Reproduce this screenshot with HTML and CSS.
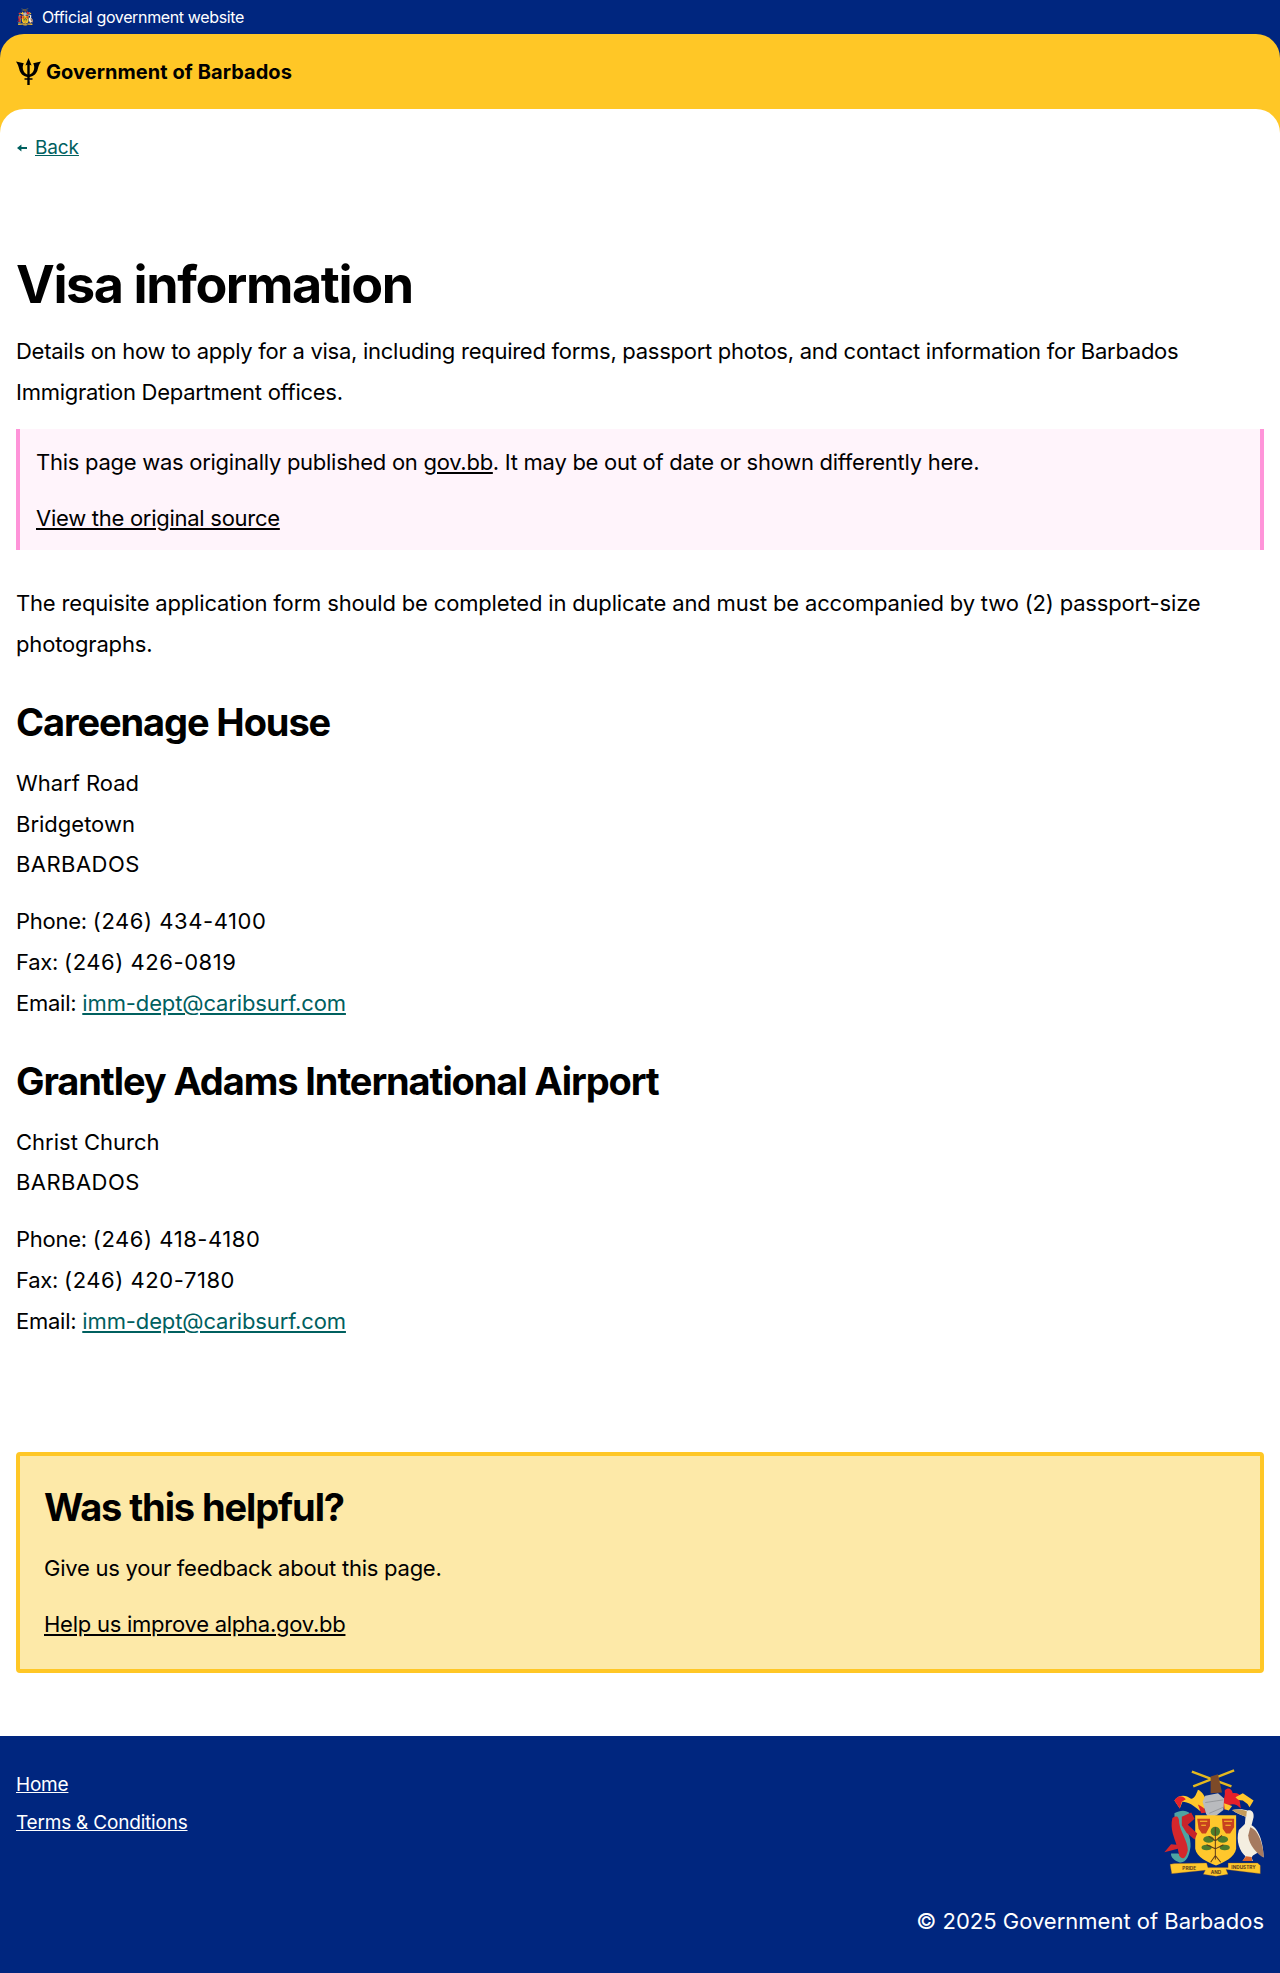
FILE: index.html
```html
<!DOCTYPE html>
<html lang="en">
<head>
  <meta charset="UTF-8">
  <meta name="viewport" content="width=device-width,initial-scale=1.0">
  <title>Visa information - Government of Barbados</title>
  <link rel="stylesheet" href="styles.css">
</head>
<body>
  <svg class="defs" width="0" height="0" aria-hidden="true">
    <symbol id="crest" viewBox="105 58 298 322">
      <!-- crossed sugar canes and arm -->
      <path d="M188 66 L306 110 M314 62 L192 110" stroke="#e3b81f" stroke-width="7" fill="none"/>
      <path d="M244 80 L266 74 L278 128 L244 130 Z" fill="#7d4a28"/>
      <!-- mantling -->
      <path d="M136 152 C150 132 172 136 184 146 C192 150 200 138 206 120 C216 124 226 136 230 150 C232 170 226 186 210 182 C196 168 176 156 160 156 L152 176 Z" fill="#ffc72c"/>
      <path d="M136 152 C146 136 160 136 170 148 L158 156 L152 176 Z" fill="#e5202a"/>
      <path d="M206 164 C218 170 228 176 232 188 L216 190 Z" fill="#d8242a"/>
      <path d="M286 122 C296 112 306 116 310 130 C322 128 334 134 340 146 L330 150 L334 176 C322 162 310 160 298 166 L286 180 L276 160 C284 150 288 136 286 122 Z" fill="#e5202a"/>
      <path d="M340 130 L372 152 L360 172 L354 162 L340 152 C330 152 322 148 318 142 Z" fill="#ffc72c"/>
      <path d="M284 160 L308 168 L298 182 L286 178 Z" fill="#ffc72c"/>
      <!-- helmet -->
      <path d="M228 138 L266 130 L284 146 L282 180 L262 196 L238 206 L230 190 L220 156 Z" fill="#b9bbbe"/>
      <path d="M228 158 L282 150 M240 190 L282 172" stroke="#85888c" stroke-width="2"/>
      <!-- shield -->
      <path d="M198 196 L320 196 L320 296 C316 322 284 336 260 346 C236 336 202 322 198 296 Z" fill="#ffc72c"/>
      <path d="M204 206 H242 V228 L230 250 H218 L208 236 Z M278 206 H314 V232 L302 250 H290 L280 236 Z" fill="#c8401f"/>
      <path d="M212 214 H234 M216 226 H230 M284 214 H308 M288 226 H304" stroke="#ffc72c" stroke-width="3"/>
      <!-- tree -->
      <g fill="#4d7c2c">
        <ellipse cx="258" cy="244" rx="14" ry="14"/>
        <ellipse cx="238" cy="268" rx="16" ry="10"/>
        <ellipse cx="280" cy="268" rx="16" ry="10"/>
        <ellipse cx="232" cy="292" rx="15" ry="8"/>
        <ellipse cx="286" cy="292" rx="15" ry="8"/>
      </g>
      <path d="M258 232 V328 M258 272 L278 256 M258 272 L238 258 M258 296 L282 284 M258 296 L232 284 M244 336 L258 316 L274 336" stroke="#5b3a1c" stroke-width="3" fill="none"/>
      <!-- dolphin -->
      <path d="M136 190 C152 180 172 180 182 190 C168 198 160 204 164 218 C172 238 186 262 184 290 C180 320 170 340 150 336 C136 332 124 320 126 310 L146 310 C156 314 158 300 152 280 C146 256 136 236 136 190 Z" fill="#4ea4a2"/>
      <path d="M130 204 C142 196 150 198 150 218 C154 246 176 272 176 300 C170 326 160 330 150 316 L146 296 L106 306 L126 282 L142 284 C136 262 122 238 130 204 Z" fill="#d5272c"/>
      <path d="M158 200 L186 188 L196 206 L176 224 L204 250 L196 268 L172 248 L158 226 Z" fill="#c8232a"/>
      <!-- pelican -->
      <path d="M308 180 C330 176 344 178 354 182 C364 178 374 186 372 202 L366 226 C392 240 402 290 402 322 L386 306 L380 310 L370 316 L366 322 L370 332 L340 332 L348 318 C332 306 318 274 328 240 L346 222 L348 200 C336 196 320 190 308 180 Z" fill="#f4eee0"/>
      <path d="M308 180 C324 178 340 178 352 184 L350 200 C336 196 320 190 308 180 Z" fill="#c49a5b"/>
      <path d="M362 232 C388 240 402 290 402 322 C384 312 358 286 356 256 Z" fill="#a67a5f"/>
      <path d="M350 318 L366 320 L368 332 L338 332 Z" fill="#d8632c"/>
      <!-- motto scroll -->
      <path d="M123 342 L136 340 L232 338 L236 352 L296 352 L296 338 L384 338 L392 346 L392 370 L290 358 L296 372 L260 378 L222 372 L228 360 L128 370 Z" fill="#ffc72c" stroke="#7d4a28" stroke-width="1"/>
    </symbol>
  </svg>

  <div class="topbar">
    <svg class="crest-small"><use href="#crest"/></svg>
    <span>Official government website</span>
  </div>

  <div class="brand-wrap">
    <header class="brand">
      <svg class="trident" viewBox="0 0 25 27" fill="#000">
        <path d="M12.5 0 L15.6 7.6 L13.7 6.8 V16.4 C15.6 15.8 17.4 14 18 11.4 C18.5 9 18.2 7 17.2 5.2 L25 3.4 C23.2 6 22.4 8.5 21.8 11 C20.8 15.6 18 18.3 13.7 18.9 V20.3 H16.5 V21.8 H13.7 V27 H11.3 V21.8 H8.5 V20.3 H11.3 V18.9 C7 18.3 4.2 15.6 3.2 11 C2.6 8.5 1.8 6 0 3.4 L7.8 5.2 C6.8 7 6.5 9 7 11.4 C7.6 14 9.4 15.8 11.3 16.4 V6.8 L9.4 7.6 Z"/>
      </svg>
      <span class="brand-name">Government of Barbados</span>
    </header>

    <main class="page">
      <a class="back" href="#"><svg viewBox="0 0 10 8" width="10" height="8" fill="#00605f"><path d="M0 4 L4.4 .6 V3 H10 V5 H4.4 V7.4 Z"/></svg><span class="back-label">Back</span></a>

      <h1>Visa information</h1>
      <p class="lead">Details on how to apply for a visa, including required forms, passport photos, and contact information for Barbados Immigration Department offices.</p>

      <div class="notice">
        <p>This page was originally published on <a href="#">gov.bb</a>. It may be out of date or shown differently here.</p>
        <p><a href="#">View the original source</a></p>
      </div>

      <p class="intro">The requisite application form should be completed in duplicate and must be accompanied by two (2) passport-size photographs.</p>

      <h2>Careenage House</h2>
      <p class="address">Wharf Road<br>Bridgetown<br><span class="caps">BARBADOS</span></p>
      <p>Phone: <span class="tel">(246) 434-4100</span><br>Fax: <span class="tel">(246) 426-0819</span><br>Email: <a class="teal" href="#">imm-dept@caribsurf.com</a></p>

      <h2>Grantley Adams International Airport</h2>
      <p class="address">Christ Church<br><span class="caps">BARBADOS</span></p>
      <p>Phone: <span class="tel">(246) 418-4180</span><br>Fax: <span class="tel">(246) 420-7180</span><br>Email: <a class="teal" href="#">imm-dept@caribsurf.com</a></p>

      <section class="feedback">
        <h2>Was this helpful?</h2>
        <p>Give us your feedback about this page.</p>
        <p><a href="#">Help us improve alpha.gov.bb</a></p>
      </section>
    </main>
  </div>

  <footer class="footer">
    <nav class="footer-links">
      <a href="#">Home</a>
      <a href="#">Terms &amp; Conditions</a>
    </nav>
    <div class="footer-right">
      <svg class="crest-large" viewBox="105 58 298 322">
        <use href="#crest" x="105" y="58" width="298" height="322"/>
        <text class="motto" x="180" y="358" text-anchor="middle">PRIDE</text>
        <text class="motto" x="260" y="371" text-anchor="middle">AND</text>
        <text class="motto" x="342" y="356" text-anchor="middle">INDUSTRY</text>
      </svg>
      <div class="copyright">© 2025 Government of Barbados</div>
    </div>
  </footer>
</body>
</html>
```

FILE: styles.css
```css
* {
  box-sizing: border-box;
}

body {
  margin: 0;
  font-family: Inter, "Liberation Sans", sans-serif;
  font-size: 22px;
  line-height: 40.8px;
  color: #000;
  background: #00267f;
}

a {
  color: inherit;
}

.defs {
  position: absolute;
}

.motto {
  font-size: 14px;
  font-weight: 700;
  fill: #5b3a1c;
}

.topbar {
  height: 34px;
  padding: 0 16px 0 17px;
  display: flex;
  align-items: center;
  gap: 9px;
  color: #fff;
  font-size: 16px;
  line-height: 24px;
  letter-spacing: -.36px;
}

.crest-small {
  width: 16px;
  height: 18px;
}

.brand-wrap {
  background: #ffc726;
  border-radius: 24px 24px 0 0;
}

.brand {
  height: 75px;
  padding: 0 16px;
  display: flex;
  align-items: center;
  gap: 5px;
}

.trident {
  width: 25px;
  height: 27px;
}

.brand-name {
  font-size: 20px;
  font-weight: 700;
  line-height: 28px;
  letter-spacing: .06px;
}

.page {
  background: #fff;
  border-radius: 24px 24px 0 0;
  padding: 25px 16px 63px;
}

.back {
  display: flex;
  align-items: center;
  gap: 8px;
  width: max-content;
  margin-left: 1px;
  font-size: 19px;
  line-height: 28px;
  letter-spacing: -.15px;
  color: #00605f;
}

.back-label {
  text-decoration: underline;
}

h1 {
  margin: 92px 0 15px;
  font-size: 52px;
  line-height: 62px;
  font-weight: 700;
  letter-spacing: -1.4px;
}

h2 {
  margin: 33px 0 17px;
  font-size: 38px;
  line-height: 48px;
  font-weight: 700;
  letter-spacing: -1.1px;
}

p {
  margin: 0 0 16px;
  letter-spacing: -.25px;
}

.lead {
  letter-spacing: -.27px;
}

.intro {
  letter-spacing: -.17px;
}

.address {
  letter-spacing: 0;
}

.caps {
  letter-spacing: .45px;
}

.tel {
  letter-spacing: .55px;
}

.notice {
  margin: 16px 0 33px;
  padding: 13px 0 11px 16px;
  background: #fff4fb;
  border-left: 4px solid #ff94d9;
  border-right: 4px solid #ff94d9;
}

.notice p {
  letter-spacing: -.27px;
}

.notice p:last-child {
  margin-bottom: 0;
}

.teal {
  color: #00605f;
  letter-spacing: -.12px;
}

.feedback {
  margin-top: 110px;
  padding: 27px 24px 24px;
  background: #fde9a8;
  border: 4px solid #ffc726;
  border-radius: 4px;
}

.feedback h2 {
  margin-top: 0;
}

.feedback p:last-child {
  margin-bottom: 0;
}

.footer {
  height: 236px;
  padding: 25px 16px;
  display: flex;
  justify-content: space-between;
  color: #fff;
}

.footer-links {
  display: flex;
  flex-direction: column;
  gap: 10px;
  padding-top: 10px;
  font-size: 19px;
  line-height: 28px;
  letter-spacing: -.2px;
}

.footer-right {
  display: flex;
  flex-direction: column;
  align-items: flex-end;
}

.crest-large {
  width: 100px;
  height: 108px;
  margin-top: 8px;
}

.copyright {
  margin-top: 27px;
  line-height: 34px;
}
```
